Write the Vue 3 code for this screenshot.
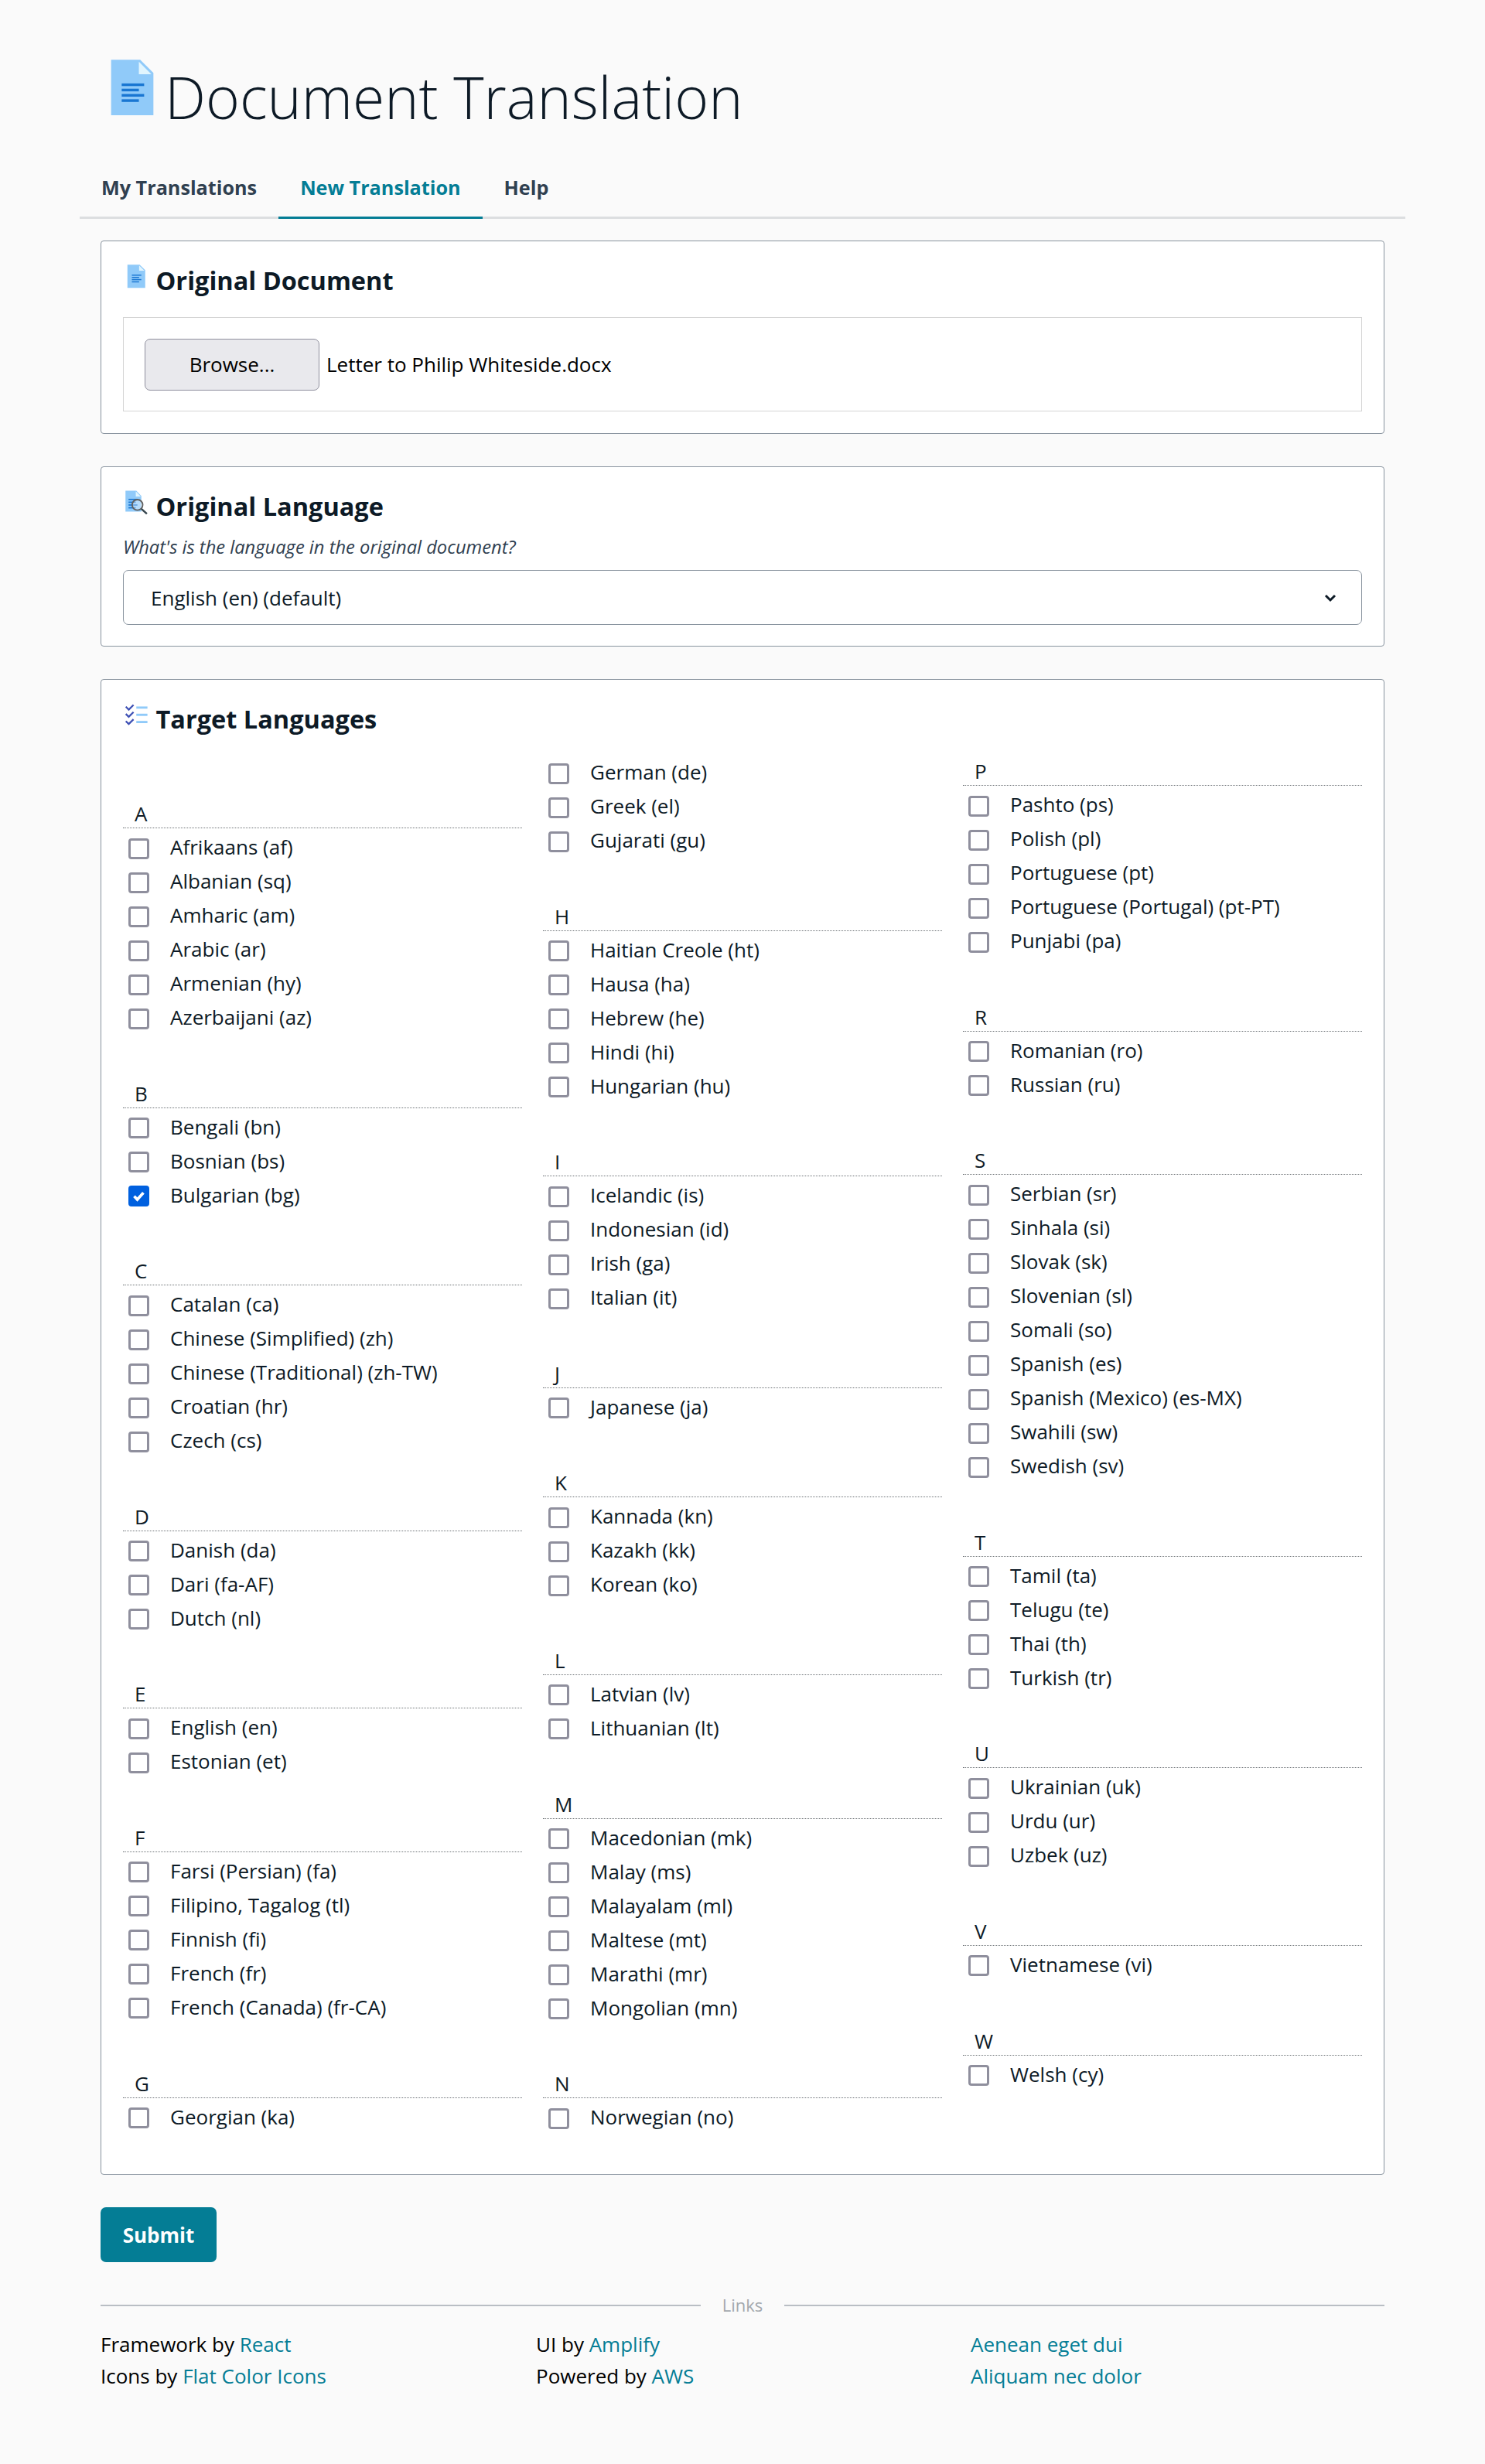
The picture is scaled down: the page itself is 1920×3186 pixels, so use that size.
<template>
  <div class="page">
    <header class="title-row">
      <svg class="title-icon" viewBox="0 0 48 48">
        <polygon fill="#90CAF9" points="40,45 8,45 8,3 30,3 40,13" />
        <polygon fill="#E1F5FE" points="38.5,14 29,14 29,4.5" />
        <g fill="#1976D2">
          <rect x="16" y="21" width="17" height="2" />
          <rect x="16" y="25" width="13" height="2" />
          <rect x="16" y="29" width="17" height="2" />
          <rect x="16" y="33" width="13" height="2" />
        </g>
      </svg>
      <h1>Document Translation</h1>
    </header>

    <nav class="tabs">
      <a class="tab">My Translations</a>
      <a class="tab active">New Translation</a>
      <a class="tab">Help</a>
    </nav>

    <main class="content">
      <section class="card">
        <h2>
          <svg class="head-icon" viewBox="0 0 48 48">
            <polygon fill="#90CAF9" points="40,45 8,45 8,3 30,3 40,13" />
            <polygon fill="#E1F5FE" points="38.5,14 29,14 29,4.5" />
            <g fill="#1976D2">
              <rect x="16" y="21" width="17" height="2" />
              <rect x="16" y="25" width="13" height="2" />
              <rect x="16" y="29" width="17" height="2" />
              <rect x="16" y="33" width="13" height="2" />
            </g>
          </svg>
          Original Document
        </h2>
        <div class="file-box">
          <button class="browse" type="button">Browse...</button>
          <span class="file-name">Letter to Philip Whiteside.docx</span>
        </div>
      </section>

      <section class="card">
        <h2>
          <svg class="head-icon" viewBox="0 0 48 48">
            <polygon fill="#90CAF9" points="33,41 4.5,41 4.5,3.5 24,3.5 33,13" />
            <polygon fill="#E1F5FE" points="32,14 23,14 23,4.5" />
            <g fill="#1976D2">
              <rect x="10" y="18" width="16" height="2.4" />
              <rect x="10" y="23" width="13" height="2.4" />
              <rect x="10" y="28" width="16" height="2.4" />
              <rect x="10" y="33" width="13" height="2.4" />
            </g>
            <circle cx="26" cy="29" r="9.5" fill="#fff" fill-opacity="0.35" stroke="#616161" stroke-width="2.6" />
            <path d="M33 36l10 9" stroke="#37474f" stroke-width="3.6" fill="none" />
          </svg>
          Original Language
        </h2>
        <p class="hint">What's is the language in the original document?</p>
        <div class="select">
          <span>English (en) (default)</span>
          <svg class="chevron" viewBox="0 0 24 24">
            <path d="M6 9l6 6 6-6" fill="none" stroke="#0d1a26" stroke-width="3" />
          </svg>
        </div>
      </section>

      <section class="card">
        <h2>
          <svg class="head-icon" viewBox="0 0 48 48">
            <g fill="#3F51B5">
              <polygon points="17.8,18.1 10.4,25.4 6.2,21.3 4,23.5 10.4,29.9 20,20.3" />
              <polygon points="17.8,5.1 10.4,12.4 6.2,8.3 4,10.5 10.4,16.9 20,7.3" />
              <polygon points="17.8,31.1 10.4,38.4 6.2,34.3 4,36.5 10.4,42.9 20,33.3" />
            </g>
            <g fill="#90CAF9">
              <rect x="24" y="22" width="20" height="4" />
              <rect x="24" y="9" width="20" height="4" />
              <rect x="24" y="35" width="20" height="4" />
            </g>
          </svg>
          Target Languages
        </h2>
        <div class="lang-columns">
          <div v-for="(col, i) in columns" :key="i" class="lang-col" :class="'col-' + i">
            <div v-for="group in col" :key="group.letter + group.items[0]" class="group">
              <div v-if="group.letter" class="letter">{{ group.letter }}</div>
              <label v-for="item in group.items" :key="item" class="lang">
                <span class="box" :class="{ checked: item === checked }">
                  <svg v-if="item === checked" viewBox="0 0 16 16">
                    <path d="M3.4 8.2l3.1 3.2 6-6.6" fill="none" stroke="#fff" stroke-width="2.8" />
                  </svg>
                </span>
                {{ item }}
              </label>
            </div>
          </div>
        </div>
      </section>

      <button class="submit" type="button">Submit</button>

      <div class="divider"><span>Links</span></div>

      <footer class="links">
        <div>
          <p>Framework by <a>React</a></p>
          <p>Icons by <a>Flat Color Icons</a></p>
        </div>
        <div>
          <p>UI by <a>Amplify</a></p>
          <p>Powered by <a>AWS</a></p>
        </div>
        <div>
          <p><a>Aenean eget dui</a></p>
          <p><a>Aliquam nec dolor</a></p>
        </div>
      </footer>
    </main>
  </div>
</template>

<script setup>
const checked = "Bulgarian (bg)";

const columns = [
  [
    { letter: "A", items: ["Afrikaans (af)", "Albanian (sq)", "Amharic (am)", "Arabic (ar)", "Armenian (hy)", "Azerbaijani (az)"] },
    { letter: "B", items: ["Bengali (bn)", "Bosnian (bs)", "Bulgarian (bg)"] },
    { letter: "C", items: ["Catalan (ca)", "Chinese (Simplified) (zh)", "Chinese (Traditional) (zh-TW)", "Croatian (hr)", "Czech (cs)"] },
    { letter: "D", items: ["Danish (da)", "Dari (fa-AF)", "Dutch (nl)"] },
    { letter: "E", items: ["English (en)", "Estonian (et)"] },
    { letter: "F", items: ["Farsi (Persian) (fa)", "Filipino, Tagalog (tl)", "Finnish (fi)", "French (fr)", "French (Canada) (fr-CA)"] },
    { letter: "G", items: ["Georgian (ka)"] },
  ],
  [
    { letter: "", items: ["German (de)", "Greek (el)", "Gujarati (gu)"] },
    { letter: "H", items: ["Haitian Creole (ht)", "Hausa (ha)", "Hebrew (he)", "Hindi (hi)", "Hungarian (hu)"] },
    { letter: "I", items: ["Icelandic (is)", "Indonesian (id)", "Irish (ga)", "Italian (it)"] },
    { letter: "J", items: ["Japanese (ja)"] },
    { letter: "K", items: ["Kannada (kn)", "Kazakh (kk)", "Korean (ko)"] },
    { letter: "L", items: ["Latvian (lv)", "Lithuanian (lt)"] },
    { letter: "M", items: ["Macedonian (mk)", "Malay (ms)", "Malayalam (ml)", "Maltese (mt)", "Marathi (mr)", "Mongolian (mn)"] },
    { letter: "N", items: ["Norwegian (no)"] },
  ],
  [
    { letter: "P", items: ["Pashto (ps)", "Polish (pl)", "Portuguese (pt)", "Portuguese (Portugal) (pt-PT)", "Punjabi (pa)"] },
    { letter: "R", items: ["Romanian (ro)", "Russian (ru)"] },
    { letter: "S", items: ["Serbian (sr)", "Sinhala (si)", "Slovak (sk)", "Slovenian (sl)", "Somali (so)", "Spanish (es)", "Spanish (Mexico) (es-MX)", "Swahili (sw)", "Swedish (sv)"] },
    { letter: "T", items: ["Tamil (ta)", "Telugu (te)", "Thai (th)", "Turkish (tr)"] },
    { letter: "U", items: ["Ukrainian (uk)", "Urdu (ur)", "Uzbek (uz)"] },
    { letter: "V", items: ["Vietnamese (vi)"] },
    { letter: "W", items: ["Welsh (cy)"] },
  ],
];
</script>

<style>
body {
  background: #fafafa;
}
</style>

<style scoped>
.page {
  height: 3186px;
  box-sizing: border-box;
  padding: 72px 103px 0;
  font-family: "Open Sans", "Noto Sans", sans-serif;
  font-size: 26px;
  color: #0d1a26;
}

.title-row {
  display: flex;
  align-items: flex-start;
  padding-left: 27px;
  height: 132px;
}

.title-icon {
  width: 82px;
  height: 82px;
  flex: none;
}

h1 {
  margin: 0 0 0 1px;
  font-size: 75px;
  font-weight: 300;
  line-height: 106px;
  color: #0d1a26;
}

.tabs {
  display: flex;
  height: 76px;
  border-bottom: 3px solid #dcdee0;
}

.tab {
  padding: 0 28px;
  height: 79px;
  box-sizing: border-box;
  font-size: 25.2px;
  line-height: 76px;
  font-weight: 700;
  color: #304050;
  border-bottom: 3px solid transparent;
}

.tab.active {
  color: #047d95;
  border-bottom-color: #047d95;
}

.content {
  padding: 28px 27px 0;
}

.card {
  background: #fff;
  border: 1px solid #89949f;
  border-radius: 4px;
  padding: 28px 28px 28px;
  margin-bottom: 42px;
}

h2 {
  display: flex;
  align-items: flex-start;
  margin: 0;
  font-size: 32.5px;
  font-weight: 700;
  line-height: 46px;
  height: 46px;
}

.head-icon {
  width: 34.5px;
  height: 34.5px;
  margin-right: 8px;
  flex: none;
}

.file-box {
  display: flex;
  align-items: center;
  margin-top: 24px;
  height: 122px;
  box-sizing: border-box;
  padding: 0 27px;
  border: 1px solid #d4d4d4;
}

.browse {
  width: 226px;
  height: 67px;
  font: inherit;
  color: #000;
  background: #e9e9ed;
  border: 1px solid #8f8f9d;
  border-radius: 7px;
  margin-right: 9px;
}

.file-name {
  color: #000;
}

.hint {
  margin: 12px 0 13px;
  font-size: 23.7px;
  line-height: 34px;
  font-style: italic;
  color: #304050;
}

.select {
  display: flex;
  align-items: center;
  justify-content: space-between;
  height: 71px;
  box-sizing: border-box;
  margin-bottom: -1px;
  padding: 0 28px 0 35px;
  border: 1px solid #89949f;
  border-radius: 7px;
}

.chevron {
  width: 24px;
  height: 24px;
}

.lang-columns {
  display: grid;
  grid-template-columns: repeat(3, 1fr);
  column-gap: 27px;
  margin-top: 24px;
  padding-bottom: 23px;
}

.col-0 {
  padding-top: 57px;
}

.col-2 {
  padding-top: 2px;
}

.group {
  margin-bottom: 57.6px;
}

.group:last-child {
  margin-bottom: 0;
}

.letter {
  height: 37px;
  box-sizing: border-box;
  padding-left: 15px;
  line-height: 36px;
  border-bottom: 1px dotted #6f7478;
  margin-bottom: 3px;
  color: #0d1a26;
}

.lang {
  display: flex;
  align-items: center;
  height: 44px;
  box-sizing: border-box;
  padding: 0 0 2px 7px;
  color: #0d1a26;
}

.box {
  width: 27px;
  height: 27px;
  box-sizing: border-box;
  flex: none;
  margin: 4px 27px 0 0;
  border: 3px solid #8f8f9d;
  border-radius: 4px;
  background: #fff;
}

.box.checked {
  background: #0060df;
  border-color: #0060df;
}

.box svg {
  display: block;
  width: 100%;
  height: 100%;
}

.submit {
  display: block;
  width: 150px;
  height: 71px;
  font: inherit;
  font-weight: 700;
  color: #fff;
  background: #047d95;
  border: none;
  border-radius: 7px;
}

.divider {
  position: relative;
  margin-top: 55px;
  height: 2px;
  background: #b9bec4;
}

.divider span {
  position: absolute;
  left: 776px;
  top: -18px;
  width: 108px;
  height: 36px;
  line-height: 36px;
  text-align: center;
  font-size: 22px;
  color: #a3a8ad;
  background: #fafafa;
}

.links {
  display: grid;
  grid-template-columns: 563px 562px 1fr;
  margin-top: 29px;
  color: #000;
}

.links p {
  margin: 0;
  line-height: 41px;
}

.links a {
  color: #047d95;
}
</style>
